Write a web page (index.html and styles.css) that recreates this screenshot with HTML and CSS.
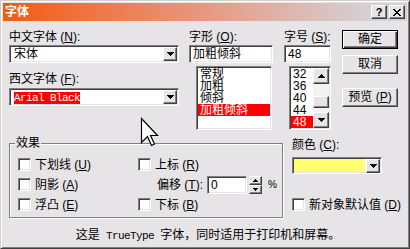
FILE: index.html
```html
<!DOCTYPE html>
<html lang="zh-CN">
<head>
  <meta charset="UTF-8">
  <title>字体</title>
  <link rel="stylesheet" href="styles.css">
</head>
<body>
  <div class="window">
    <div class="titlebar">
      <span class="title">字体</span>
      <div class="caption-btns">
        <span class="cap-btn help">?</span>
        <span class="cap-btn">
          <svg width="8" height="7" viewBox="0 0 8 7"><path d="M0 0h2v1H0zM6 0h2v1H6zM1 1h2v1H1zM5 1h2v1H5zM2 2h4v1H2zM3 3h2v1H3zM2 4h4v1H2zM1 5h2v1H1zM5 5h2v1H5zM0 6h2v1H0zM6 6h2v1H6z" fill="#000"/></svg>
        </span>
      </div>
    </div>

    <div class="content">
      <div class="top">
        <div class="col col-face">
          <div class="lbl">中文字体 (<u>N</u>):</div>
          <div class="combo">
            <span class="combo-text">宋体</span>
            <span class="drop"><svg width="7" height="4"><path d="M0 0h7v1H0zM1 1h5v1H1zM2 2h3v1H2zM3 3h1v1H3z"/></svg></span>
          </div>
          <div class="lbl lbl-west">西文字体 (<u>F</u>):</div>
          <div class="combo">
            <span class="combo-text"><span class="sel mono">Arial Black</span></span>
            <span class="drop"><svg width="7" height="4"><path d="M0 0h7v1H0zM1 1h5v1H1zM2 2h3v1H2zM3 3h1v1H3z"/></svg></span>
          </div>
        </div>

        <div class="col col-style">
          <div class="lbl">字形 (<u>O</u>):</div>
          <div class="edit">加粗倾斜</div>
          <ul class="list list-style">
            <li>常规</li>
            <li>加粗</li>
            <li>倾斜</li>
            <li class="sel">加粗倾斜</li>
          </ul>
        </div>

        <div class="col col-size">
          <div class="lbl">字号 (<u>S</u>):</div>
          <div class="edit">48</div>
          <div class="list list-size">
            <ul class="items">
              <li>32</li>
              <li>36</li>
              <li>40</li>
              <li>44</li>
              <li class="sel">48</li>
            </ul>
            <div class="scrollbar">
              <span class="sb-btn"><svg width="7" height="4"><path d="M3 0h1v1H3zM2 1h3v1H2zM1 2h5v1H1zM0 3h7v1H0z"/></svg></span>
              <span class="sb-track"></span>
              <span class="sb-thumb"></span>
              <span class="sb-gap"></span>
              <span class="sb-btn"><svg width="7" height="4"><path d="M0 0h7v1H0zM1 1h5v1H1zM2 2h3v1H2zM3 3h1v1H3z"/></svg></span>
            </div>
          </div>
        </div>

        <div class="col col-btns">
          <div class="btn btn-default">确定</div>
          <div class="btn">取消</div>
          <div class="btn btn-preview">预览 (<u>P</u>)</div>
        </div>
      </div>

      <div class="bottom">
        <div class="group">
          <span class="legend">效果</span>
          <div class="group-grid">
            <div class="chk-row"><span class="chk"></span><span>下划线 (<u>U</u>)</span></div>
            <div class="chk-row"><span class="chk"></span><span>上标 (<u>R</u>)</span></div>
            <div class="chk-row"><span class="chk"></span><span>阴影 (<u>A</u>)</span></div>
            <div class="chk-row offset-row">
              <span class="offset-lbl">偏移 (<u>T</u>):</span>
              <span class="edit spin-edit">0</span>
              <span class="spin">
                <span class="spin-btn"><svg width="5" height="3"><path d="M2 0h1v1H2zM1 1h3v1H1zM0 2h5v1H0z"/></svg></span>
                <span class="spin-btn"><svg width="5" height="3"><path d="M0 0h5v1H0zM1 1h3v1H1zM2 2h1v1H2z"/></svg></span>
              </span>
              <span class="pct">%</span>
            </div>
            <div class="chk-row"><span class="chk"></span><span>浮凸 (<u>E</u>)</span></div>
            <div class="chk-row"><span class="chk"></span><span>下标 (<u>B</u>)</span></div>
          </div>
        </div>

        <div class="col-color">
          <div class="lbl">颜色 (<u>C</u>):</div>
          <div class="combo combo-color">
            <span class="swatch"></span>
            <span class="drop"><svg width="7" height="4"><path d="M0 0h7v1H0zM1 1h5v1H1zM2 2h3v1H2zM3 3h1v1H3z"/></svg></span>
          </div>
          <div class="chk-row default-row"><span class="chk"></span><span>新对象默认值 (<u>D</u>)</span></div>
        </div>
      </div>

      <div class="status">这是 <span class="mono">TrueType</span> 字体，同时适用于打印机和屏幕。</div>
    </div>

    <svg class="cursor" width="20" height="32" viewBox="0 0 20 32">
      <path d="M1.5 1.5V25.5L7.5 19.5L11.5 28.5L14.5 27L10.5 18.5H17.5Z" fill="#fff" stroke="#000" stroke-width="1.2" stroke-linejoin="miter"/>
    </svg>
  </div>
</body>
</html>
```

FILE: styles.css
```css
/* Win2000 style font dialog */
body {
  margin: 0;
  background-color: #e6e4e6;
  font-family: "Liberation Sans", "Noto Sans CJK SC", sans-serif;
  font-size: 12px;
  color: #000;
}

ul {
  list-style: none;
  margin: 0;
  padding: 0;
}

.mono {
  font-family: "Liberation Mono", monospace;
  font-size: 11px;
  letter-spacing: -0.6px;
}

.window {
  position: relative;
  width: 410px;
  height: 249px;
  box-sizing: border-box;
  padding: 2px;
  background-color: #e6e4e6;
  border: 1px solid;
  border-color: #d4d0c8 #404040 #404040 #d4d0c8;
  box-shadow: inset 1px 1px #fff, inset -1px -1px #808080;
}

/* title bar */
.titlebar {
  display: flex;
  align-items: center;
  height: 18px;
  padding: 0 2px 0 2px;
  background: linear-gradient(to right, #f25a12, #ea9276 45%, #d4d0d4 90%);
}

.title {
  color: #fff;
  font-weight: bold;
  line-height: 12px;
}

.caption-btns {
  display: flex;
  gap: 2px;
  margin-left: auto;
}

.cap-btn {
  display: flex;
  align-items: center;
  justify-content: center;
  width: 16px;
  height: 14px;
  box-sizing: border-box;
  background-color: #e6e4e6;
  border: 1px solid;
  border-color: #fff #404040 #404040 #fff;
  box-shadow: inset -1px -1px #808080;
}

.help {
  font-weight: bold;
  font-size: 11px;
  line-height: 11px;
}

/* shared controls */
.lbl {
  height: 12px;
  line-height: 12px;
  white-space: nowrap;
}

.combo,
.edit,
.list,
.chk {
  box-sizing: border-box;
  background-color: #fff;
  border: 1px solid;
  border-color: #808080 #fff #fff #808080;
  box-shadow: inset 1px 1px #404040, inset -1px -1px #e6e4e6;
}

.combo {
  display: flex;
  align-items: center;
  height: 18px;
  padding: 1px;
}

.combo-text {
  flex: 1;
  padding-left: 3px;
  line-height: 12px;
}

.combo .sel {
  display: inline-block;
  line-height: 12px;
  color: #fff;
  background-color: #f00;
}

.drop,
.sb-btn,
.spin-btn,
.btn,
.sb-thumb {
  box-sizing: border-box;
  background-color: #e6e4e6;
  border: 1px solid;
  border-color: #fff #404040 #404040 #fff;
  box-shadow: inset -1px -1px #808080;
}

.drop {
  display: flex;
  align-items: center;
  justify-content: center;
  width: 14px;
  height: 14px;
}

.edit {
  height: 18px;
  padding: 2px 3px;
  line-height: 12px;
}

.list {
  padding: 1px;
  height: 64px;
  overflow: hidden;
}

.list li {
  height: 12px;
  line-height: 12px;
  padding-left: 2px;
  white-space: nowrap;
}

.list li.sel {
  color: #fff;
  background-color: #f00;
}

/* top section */
.content {
  padding-left: 6px;
}

.top {
  display: flex;
  margin-top: 10px;
}

.col-face {
  width: 170px;
}

.col-face .combo {
  margin-top: 2px;
}

.lbl-west {
  margin-top: 10px;
}

.col-face .combo:last-child {
  margin-top: 3px;
}

.col-style {
  width: 84px;
  margin-left: 10px;
}

.col-size {
  width: 47px;
  margin-left: 11px;
}

.col-style .edit,
.col-size .edit {
  margin-top: 2px;
}

.list-style {
  width: 76px;
  margin: 3px 0 0 7px;
}

.list-size {
  display: flex;
  width: 42px;
  margin: 3px 0 0 5px;
}

.list-size .items {
  flex: 1;
}

.scrollbar {
  display: flex;
  flex-direction: column;
  width: 16px;
  background-color: #f4f3f4;
}

.sb-btn {
  display: flex;
  align-items: center;
  justify-content: center;
  height: 16px;
}

.sb-track {
  height: 12px;
}

.sb-thumb {
  height: 12px;
}

.sb-gap {
  flex: 1;
}

.col-btns {
  display: flex;
  flex-direction: column;
  width: 56px;
  margin: -1px 0 0 11px;
}

.btn {
  height: 19px;
  line-height: 17px;
  text-align: center;
  margin-bottom: 6px;
}

.btn-default {
  border-color: #000;
  box-shadow: inset 1px 1px #fff, inset -1px -1px #404040, inset -2px -2px #808080;
}

.btn-preview {
  margin-top: 8px;
}

/* bottom section */
.bottom {
  display: flex;
  margin-top: 7px;
}

.group {
  position: relative;
  width: 274px;
  height: 75px;
  margin-top: 6px;
  box-sizing: border-box;
  padding: 14px 0 0 8px;
  border: 1px solid #808080;
  box-shadow: inset 1px 1px #fff, 1px 1px #fff;
}

.legend {
  position: absolute;
  top: -7px;
  left: 5px;
  padding: 0 1px;
  line-height: 12px;
  background-color: #e6e4e6;
}

.group-grid {
  display: grid;
  grid-template-columns: 120px auto;
  row-gap: 7px;
}

.chk-row {
  display: flex;
  align-items: center;
  gap: 4px;
  height: 13px;
  line-height: 12px;
  white-space: nowrap;
}

.chk {
  width: 13px;
  height: 13px;
  flex: none;
}

.offset-row {
  gap: 0;
  padding-left: 19px;
}

.offset-lbl {
  width: 50px;
}

.spin-edit {
  width: 40px;
  height: 18px;
  padding: 2px 3px;
}

.spin {
  display: flex;
  flex-direction: column;
  margin-left: 2px;
}

.spin-btn {
  display: flex;
  align-items: center;
  justify-content: center;
  width: 13px;
  height: 9px;
}

.pct {
  margin-left: 6px;
  font-size: 10px;
}

.col-color {
  margin-left: 9px;
  padding-top: 2px;
}

.combo-color {
  width: 90px;
  height: 17px;
  margin-top: 6px;
}

.swatch {
  flex: 1;
  height: 100%;
  margin-right: 1px;
  background-color: #ffff70;
}

.default-row {
  margin-top: 24px;
}

.status {
  margin-top: 11px;
  line-height: 12px;
  text-align: center;
}

.status .mono {
  margin: 0 3px;
}

/* mouse pointer over the dialog */
.cursor {
  position: absolute;
  left: 139px;
  top: 116px;
}
```
